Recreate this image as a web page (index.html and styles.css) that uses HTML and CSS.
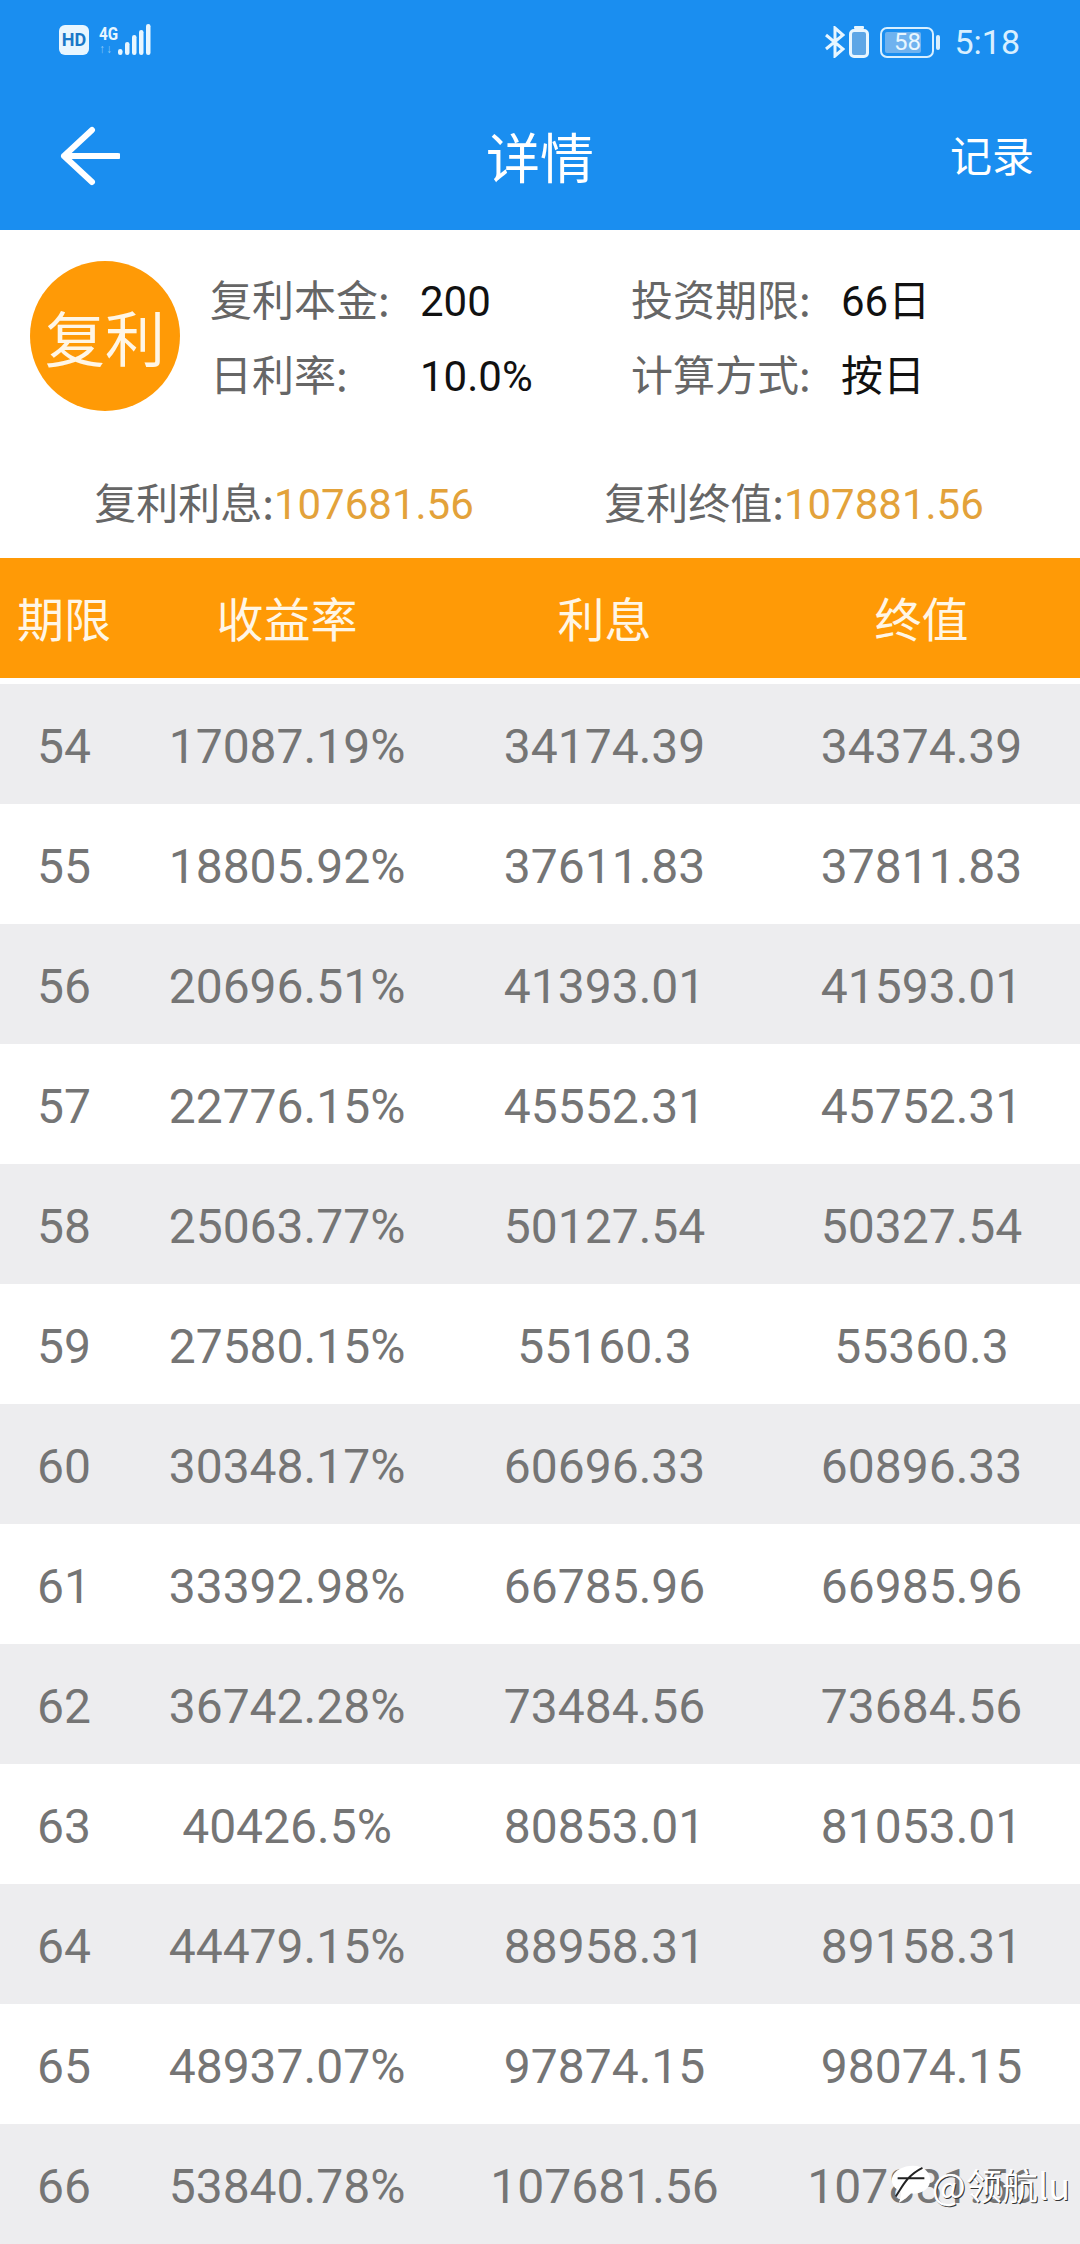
FILE: index.html
```html
<!DOCTYPE html>
<html lang="zh-CN">
<head>
    <meta charset="UTF-8">
    <meta name="viewport" content="width=device-width, initial-scale=1.0">
    <title>详情</title>
    <link rel="stylesheet" href="styles.css">
</head>
<body>
    <header class="top">
        <div class="status-bar">
            <div class="status-left">
                <span class="hd">HD</span>
                <div class="net">
                    <span class="net-4g">4G</span>
                    <span class="net-arrows">↑↓</span>
                </div>
                <svg class="signal" width="33" height="31" viewBox="0 0 33 31">
                    <rect x="0" y="25" width="4.500" height="6" rx="2.200" fill="#e8f6ff"/>
                    <rect x="7" y="18" width="4.500" height="13" rx="2.200" fill="#e8f6ff"/>
                    <rect x="14" y="11" width="4.500" height="20" rx="2.200" fill="#e8f6ff"/>
                    <rect x="21" y="6" width="4.500" height="25" rx="2.200" fill="#e8f6ff"/>
                    <rect x="28" y="0" width="4.500" height="31" rx="2.200" fill="#e8f6ff"/>
                </svg>
            </div>
            <div class="status-right">
                <svg class="bt" width="20" height="32" viewBox="0 0 20 32">
                    <path d="M1 9 L18 23 L10 30 V2 L18 9 L1 23" fill="none" stroke="#e8f6ff" stroke-width="3"/>
                </svg>
                <svg class="vibrate" width="20" height="32" viewBox="0 0 20 32">
                    <rect x="5" y="0" width="10" height="3" rx="1" fill="#e8f6ff"/>
                    <rect x="1.500" y="4.500" width="17" height="26" rx="3.500" fill="#5da6e6" stroke="#e8f6ff" stroke-width="3"/>
                </svg>
                <div class="battery">
                    <div class="battery-box">
                        <div class="battery-fill"></div>
                        <span class="battery-num">58</span>
                    </div>
                    <div class="battery-tip"></div>
                </div>
                <span class="clock">5:18</span>
            </div>
        </div>
        <div class="title-bar">
            <svg class="back" width="60" height="60" viewBox="0 0 60 60">
                <path d="M32 4 L4 30 L32 56 M4 30 H58" fill="none" stroke="#fff" stroke-width="6" stroke-linecap="round" stroke-linejoin="round"/>
            </svg>
            <h1>详情</h1>
            <a class="record" href="#">记录</a>
        </div>
    </header>

    <section class="info">
        <div class="info-main">
            <div class="badge">复利</div>
            <div class="info-grid">
                <span class="label">复利本金:</span><span class="value">200</span>
                <span class="label">投资期限:</span><span class="value">66日</span>
                <span class="label">日利率:</span><span class="value">10.0%</span>
                <span class="label">计算方式:</span><span class="value">按日</span>
            </div>
        </div>
        <div class="info-sum">
            <p>复利利息:<span>107681.56</span></p>
            <p>复利终值:<span>107881.56</span></p>
        </div>
    </section>

    <div class="row head">
        <div>期限</div><div>收益率</div><div>利息</div><div>终值</div>
    </div>

    <div id="rows" class="rows"></div>

    <div class="watermark">
        <svg width="42" height="42" viewBox="0 0 44 42">
            <path d="M24 2 C36 2 43 10 42 18 C41 28 30 32 22 31 C18 35 13 39 9 41 C11 36 12 33 11 29 C5 26 1 21 2 15 C4 7 14 2 24 2 Z" fill="#fff"/>
            <path d="M6 34 C14 22 18 12 34 4 M8 15 H36" fill="none" stroke="#222" stroke-width="2"/>
        </svg>
        <span>@领航lu</span>
    </div>

    <script>
        const data = [
            [54, '17087.19%', '34174.39', '34374.39'],
            [55, '18805.92%', '37611.83', '37811.83'],
            [56, '20696.51%', '41393.01', '41593.01'],
            [57, '22776.15%', '45552.31', '45752.31'],
            [58, '25063.77%', '50127.54', '50327.54'],
            [59, '27580.15%', '55160.3', '55360.3'],
            [60, '30348.17%', '60696.33', '60896.33'],
            [61, '33392.98%', '66785.96', '66985.96'],
            [62, '36742.28%', '73484.56', '73684.56'],
            [63, '40426.5%', '80853.01', '81053.01'],
            [64, '44479.15%', '88958.31', '89158.31'],
            [65, '48937.07%', '97874.15', '98074.15'],
            [66, '53840.78%', '107681.56', '107881.56']
        ];

        const rows = document.getElementById('rows');
        data.forEach((item) => {
            const rowDiv = document.createElement('div');
            rowDiv.className = 'row';
            rowDiv.innerHTML = item.map((cell) => `<div>${cell}</div>`).join('');
            rows.appendChild(rowDiv);
        });
    </script>
</body>
</html>
```

FILE: styles.css
```css
* {
    box-sizing: border-box;
}
html, body {
    margin: 0;
    height: 2244px;
    overflow: hidden;
}
body {
    position: relative;
    font-family: "Noto Sans CJK SC", Roboto, sans-serif;
    background: #fff;
    color: #666;
}
.top {
    height: 230px;
    background: #1a8ef0;
    color: #fff;
}
.status-bar {
    height: 80px;
    display: flex;
    justify-content: space-between;
    align-items: flex-start;
    padding: 24px 60px 0 59px;
}
.status-left, .status-right {
    display: flex;
    align-items: center;
}
.hd {
    width: 30px;
    height: 30px;
    border-radius: 6px;
    background: #e8f6ff;
    color: #1a78c8;
    font: bold 18px/30px Roboto, sans-serif;
    text-align: center;
}
.net {
    width: 18px;
    height: 31px;
    margin-left: 10px;
    display: flex;
    flex-direction: column;
    justify-content: space-between;
    font-family: Roboto, sans-serif;
    line-height: 1;
}
.net-4g {
    font-size: 19px;
    font-weight: bold;
    color: #e8f6ff;
    transform: scaleX(.8);
    transform-origin: left top;
}
.net-arrows {
    font-size: 12px;
    letter-spacing: 1px;
    color: #8cc8f5;
    white-space: nowrap;
}
.signal {
    margin-left: 1px;
}
.vibrate {
    margin-left: 4px;
}
.battery {
    display: flex;
    align-items: center;
    margin-left: 11px;
}
.battery-box {
    position: relative;
    width: 54px;
    height: 31px;
    border: 2px solid #d8efff;
    border-radius: 7px;
    overflow: hidden;
}
.battery-fill {
    width: 36px;
    margin: 3px;
    height: 21px;
    border-radius: 2px;
    background: #6fb2ef;
}
.battery-num {
    position: absolute;
    left: 0;
    right: 0;
    top: 0;
    text-align: center;
    color: #e8f6ff;
    font: 24px/27px Roboto, sans-serif;
}
.battery-tip {
    width: 4px;
    height: 15px;
    margin-left: 2px;
    border-radius: 2px;
    background: #d8efff;
}
.clock {
    margin-left: 14px;
    color: #d8efff;
    font: 34px/36px Roboto, sans-serif;
}
.title-bar {
    height: 150px;
    display: flex;
    align-items: center;
    justify-content: space-between;
    padding: 0 46px 0 60px;
    position: relative;
}
.back {
    margin-top: 2px;
}
.title-bar h1 {
    position: absolute;
    left: 0;
    right: 0;
    top: 46px;
    margin: 0;
    text-align: center;
    font-size: 54px;
    font-weight: 400;
    line-height: 60px;
}
.record {
    color: #fff;
    text-decoration: none;
    font-size: 42px;
    margin-top: -4px;
}
.info {
    height: 328px;
    padding-top: 31px;
}
.info-main {
    display: flex;
    align-items: center;
    padding-left: 30px;
}
.badge {
    width: 150px;
    height: 150px;
    border-radius: 50%;
    background: #ff9a06;
    color: #fff6e6;
    font-size: 60px;
    line-height: 150px;
    text-align: center;
    flex: none;
}
.info-grid {
    display: grid;
    grid-template-columns: 210px 211px 210px 1fr;
    grid-auto-rows: 75px;
    align-items: baseline;
    margin: -2px 0 0 30px;
    font-size: 42px;
    line-height: 75px;
}
.label {
    color: #666;
}
.value {
    color: #111;
    font-family: Roboto, "Noto Sans CJK SC", sans-serif;
}
.info-sum {
    display: flex;
    margin-top: 60px;
    padding-left: 29px;
    font-size: 42px;
    line-height: 60px;
}
.info-sum p {
    margin: 0;
    flex: 0 0 510px;
    text-align: center;
    white-space: nowrap;
}
.info-sum span {
    color: #e3a23a;
    font-family: Roboto, sans-serif;
}
.row {
    height: 120px;
    display: grid;
    grid-template-columns: 128px 318px 317px 317px;
    align-items: center;
    text-align: center;
    font-family: Roboto, "Noto Sans CJK SC", sans-serif;
    font-size: 48px;
    color: #757575;
}
.rows .row {
    padding-top: 4px;
}
.row.head {
    background: #ff9a06;
    color: #fff6e6;
    font-family: "Noto Sans CJK SC", sans-serif;
    font-size: 47px;
    padding-bottom: 4px;
}
.rows {
    margin-top: 6px;
}
.rows .row:nth-child(odd) {
    background: #ededef;
}
.watermark {
    position: absolute;
    right: 10px;
    bottom: 38px;
    display: flex;
    align-items: center;
    color: #fff;
    font-size: 36px;
    line-height: 44px;
    text-shadow: 1px 1px 0 #333;
}
```
